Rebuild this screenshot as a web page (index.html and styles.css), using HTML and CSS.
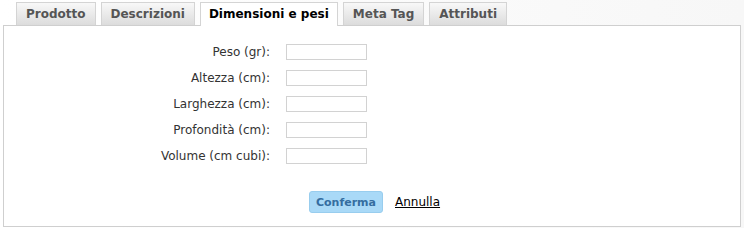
FILE: index.html
```html
<!DOCTYPE html>
<html lang="it">
<head>
    <meta charset="UTF-8">
    <title>Dimensioni e pesi</title>
    <link rel="stylesheet" href="styles.css">
</head>
<body>
    <div class="page">
        <ul class="tabs">
            <li class="tab">Prodotto</li>
            <li class="tab">Descrizioni</li>
            <li class="tab active">Dimensioni e pesi</li>
            <li class="tab">Meta Tag</li>
            <li class="tab">Attributi</li>
        </ul>

        <div class="panel">
            <form class="form">
                <div class="row">
                    <label for="peso">Peso (gr):</label>
                    <input type="text" id="peso">
                </div>
                <div class="row">
                    <label for="altezza">Altezza (cm):</label>
                    <input type="text" id="altezza">
                </div>
                <div class="row">
                    <label for="larghezza">Larghezza (cm):</label>
                    <input type="text" id="larghezza">
                </div>
                <div class="row">
                    <label for="profondita">Profondità (cm):</label>
                    <input type="text" id="profondita">
                </div>
                <div class="row">
                    <label for="volume">Volume (cm cubi):</label>
                    <input type="text" id="volume">
                </div>

                <div class="actions">
                    <button type="button" class="btn-confirm">Conferma</button>
                    <a href="#" class="link-cancel">Annulla</a>
                </div>
            </form>
        </div>
    </div>
</body>
</html>
```

FILE: styles.css
```css
body {
    margin: 0;
    padding: 0;
    background-color: #fff;
    font-family: "DejaVu Sans", Verdana, sans-serif;
    font-size: 12px;
    color: #333;
}
.page {
    padding: 2px 3px 1px 3px;
    background: linear-gradient(to right, #fff, #f7f7f7);
}
.tabs {
    display: flex;
    gap: 5px;
    list-style: none;
    margin: 0;
    padding: 0 0 0 13px;
    height: 23px;
}
.tab {
    box-sizing: border-box;
    height: 23px;
    padding: 0 9px;
    line-height: 22px;
    font-size: 12px;
    font-weight: bold;
    color: #555;
    border: 1px solid #d4d4d4;
    border-bottom: none;
    background: linear-gradient(to bottom, #f8f8f8, #dcdcdc);
}
.tab.active {
    height: 24px;
    padding: 0 8px;
    color: #000;
    background: #fff;
    position: relative;
    z-index: 1;
}
.panel {
    box-sizing: border-box;
    height: 202px;
    border: 1px solid #cfcfcf;
    background-color: #fff;
}
.form {
    padding-top: 18px;
}
.row {
    display: flex;
    align-items: center;
    height: 26px;
}
.row label {
    width: 266px;
    margin-right: 16px;
    margin-bottom: 10px;
    text-align: right;
    color: #333;
}
.row input {
    box-sizing: border-box;
    width: 81px;
    height: 16px;
    margin: 0 0 10px 0;
    border: 1px solid #d2d2d2;
    background: #fff;
    padding: 0;
}
.actions {
    display: flex;
    align-items: center;
    padding-left: 305px;
    margin-top: 17px;
    gap: 12px;
}
.btn-confirm {
    box-sizing: border-box;
    width: 74px;
    height: 22px;
    padding: 0;
    border: 1px solid #98cdee;
    border-radius: 3px;
    background-color: #a9d9f7;
    color: #346da0;
    font-family: inherit;
    font-size: 11px;
    font-weight: bold;
}
.link-cancel {
    color: #000;
    text-decoration: underline;
    font-size: 12px;
}
```
